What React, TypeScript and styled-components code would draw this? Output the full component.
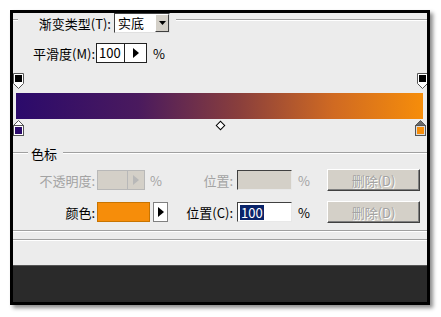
import React from 'react';
import styled, { createGlobalStyle } from 'styled-components';

const GlobalStyle = createGlobalStyle`
  html, body {
    margin: 0;
    padding: 0;
    background: #ffffff;
  }
  body {
    font-family: "Noto Sans CJK SC", "Liberation Sans", sans-serif;
    font-size: 13px;
    color: #000;
  }
`;

const Page = styled.div`
  width: 441px;
  height: 317px;
  padding: 10px 0 0 10px;
  box-sizing: border-box;
`;

const Frame = styled.div`
  width: 420px;
  height: 295px;
  box-sizing: border-box;
  border: 3px solid #000;
  background: #ececec;
  box-shadow: 3px 3px 4px rgba(0, 0, 0, 0.45);
  display: flex;
  flex-direction: column;
  overflow: hidden;
`;

const Etched = styled.div`
  height: 0;
  border-top: 1px solid #a0a0a0;
  border-bottom: 1px solid #ffffff;
`;

const LegendRow = styled.div<{ $height: number; $top?: number }>`
  height: ${({ $height }) => $height}px;
  margin-top: ${({ $top = 0 }) => $top}px;
  display: flex;
  align-items: center;
  gap: 3px;
`;

const LeadLine = styled(Etched)<{ $width: number }>`
  width: ${({ $width }) => $width}px;
  align-self: flex-start;
  margin-top: 6px;
`;

const FillLine = styled(Etched)`
  flex: 1;
  align-self: flex-start;
  margin-top: 6px;
  margin-left: 3px;
`;

const Label = styled.span<{ $disabled?: boolean; $width?: number }>`
  display: inline-block;
  text-align: right;
  white-space: nowrap;
  width: ${({ $width }) => ($width ? `${$width}px` : 'auto')};
  color: ${({ $disabled }) => ($disabled ? '#a3a3a3' : '#000')};
  line-height: 15px;
`;

const Select = styled.div`
  width: 56px;
  height: 20px;
  box-sizing: border-box;
  background: #fff;
  border: 1px solid;
  border-color: #404040 #e0e0e0 #e0e0e0 #404040;
  display: flex;
  align-items: stretch;
`;

const SelectText = styled.span`
  flex: 1;
  padding-left: 3px;
  line-height: 18px;
`;

const DropButton = styled.div`
  width: 14px;
  background: #d4d0c8;
  border: 1px solid;
  border-color: #fff #404040 #404040 #fff;
  box-sizing: border-box;
  display: flex;
  align-items: center;
  justify-content: center;
`;

const Row = styled.div<{ $height: number; $top: number }>`
  height: ${({ $height }) => $height}px;
  margin-top: ${({ $top }) => $top}px;
  display: flex;
  align-items: center;
`;

const SpinBox = styled.div`
  width: 51px;
  height: 20px;
  box-sizing: border-box;
  border: 1px solid #222;
  background: #fff;
  display: flex;
  margin-left: 1px;
`;

const SpinText = styled.span`
  width: 25px;
  padding-left: 2px;
  line-height: 18px;
  border-right: 1px solid #222;
`;

const SpinArrow = styled.div`
  flex: 1;
  display: flex;
  align-items: center;
  justify-content: center;
`;

const Unit = styled.span<{ $disabled?: boolean; $gap: number }>`
  display: inline-block;
  width: 11px;
  margin-left: ${({ $gap }) => $gap}px;
  color: ${({ $disabled }) => ($disabled ? '#a3a3a3' : '#000')};
`;

const Editor = styled.div`
  position: relative;
  height: 64px;
  margin-top: 10px;
`;

const Bar = styled.div`
  position: absolute;
  left: 3px;
  right: 4px;
  top: 20px;
  height: 26px;
  background: linear-gradient(to right, #2b0a6b 0%, #4a1a5e 30%, #8a3f3c 55%, #d06a22 78%, #f68d0a 100%);
`;

const Stop = styled.div<{ $left: number; $top: number }>`
  position: absolute;
  left: ${({ $left }) => $left}px;
  top: ${({ $top }) => $top}px;
  width: 11px;
  height: 16px;
`;

const Diamond = styled.div`
  position: absolute;
  left: 204px;
  top: 49px;
  width: 5px;
  height: 5px;
  border: 1px solid #000;
  background: #fff;
  transform: rotate(45deg);
`;

const Swatch = styled.div<{ $color: string; $width: number; $disabled?: boolean }>`
  width: ${({ $width }) => $width}px;
  height: 20px;
  box-sizing: border-box;
  background: ${({ $color }) => $color};
  border: 1px solid ${({ $disabled }) => ($disabled ? '#b8b8b8' : '#c87400')};
  margin-left: 2px;
  display: flex;
  justify-content: flex-end;
`;

const DisabledArrow = styled.div`
  width: 16px;
  border-left: 1px solid #b8b8b8;
  display: flex;
  align-items: center;
  justify-content: center;
`;

const ArrowButton = styled.div`
  width: 15px;
  height: 20px;
  box-sizing: border-box;
  border: 1px solid #808080;
  background: #fff;
  margin-left: 3px;
  display: flex;
  align-items: center;
  justify-content: center;
`;

const Field = styled.div<{ $disabled?: boolean }>`
  width: 55px;
  height: 20px;
  box-sizing: border-box;
  margin-left: 4px;
  border: 1px solid;
  border-color: #404040 #e8e8e8 #e8e8e8 #404040;
  background: ${({ $disabled }) => ($disabled ? '#d4d0c8' : '#fff')};
  padding: 1px 2px;
  display: flex;
  align-items: center;
`;

const Selected = styled.span`
  background: #0a246a;
  color: #fff;
  line-height: 15px;
  padding: 0 1px;
`;

const Button = styled.div`
  width: 93px;
  height: 22px;
  box-sizing: border-box;
  margin-left: 18px;
  background: #d4d0c8;
  border: 1px solid;
  border-color: #ffffff #404040 #404040 #ffffff;
  box-shadow: inset -1px -1px 0 #808080;
  color: #a3a3a3;
  text-shadow: 1px 1px 0 #ffffff;
  display: flex;
  align-items: center;
  justify-content: center;
`;

const Separator = styled(Etched)<{ $top: number }>`
  margin-top: ${({ $top }) => $top}px;
`;

const Dock = styled.div`
  margin-top: auto;
  height: 36px;
  background: #2a2a2a;
  border-top: 1px solid #555;
`;

const Tri: React.FC<{ color?: string; dir?: 'right' | 'down' }> = ({ color = '#000', dir = 'down' }) =>
  dir === 'down' ? (
    <svg width="7" height="4" viewBox="0 0 7 4"><path d="M0 0h7L3.5 4z" fill={color} /></svg>
  ) : (
    <svg width="6" height="10" viewBox="0 0 6 10"><path d="M0 0l6 5-6 5z" fill={color} /></svg>
  );

const TopStop: React.FC = () => (
  <svg width="11" height="16" viewBox="0 0 11 16">
    <path d="M0.5 0.5h10v10l-5 5-5-5z" fill="#fff" stroke="#555" />
    <rect x="2" y="2" width="7" height="7" fill="#000" />
  </svg>
);

const BottomStop: React.FC<{ color: string; active?: boolean }> = ({ color, active }) => (
  <svg width="11" height="16" viewBox="0 0 11 16">
    <path d="M0.5 15.5h10v-10l-5-5-5 5z" fill={active ? '#6a6a6a' : '#fff'} stroke="#555" />
    <rect x="0.5" y="5.5" width="10" height="10" fill={active ? '#dcdcdc' : '#fff'} stroke="#555" />
    <rect x="2" y="7" width="7" height="7" fill={color} />
  </svg>
);

const App: React.FC = () => {
  return (
    <Page>
      <GlobalStyle />
      <Frame>
        <LegendRow $height={20}>
          <LeadLine $width={5} />
          <Label $width={90}>渐变类型(T):</Label>
          <Select>
            <SelectText>实底</SelectText>
            <DropButton>
              <Tri />
            </DropButton>
          </Select>
          <FillLine />
        </LegendRow>

        <Row $height={20} $top={10}>
          <Label $width={82}>平滑度(M):</Label>
          <SpinBox>
            <SpinText>100</SpinText>
            <SpinArrow>
              <Tri dir="right" />
            </SpinArrow>
          </SpinBox>
          <Unit $gap={6}>%</Unit>
        </Row>

        <Editor>
          <Stop $left={0} $top={0}>
            <TopStop />
          </Stop>
          <Stop $left={404} $top={0}>
            <TopStop />
          </Stop>
          <Bar />
          <Stop $left={0} $top={47}>
            <BottomStop color="#2b0a6b" />
          </Stop>
          <Stop $left={402} $top={47}>
            <BottomStop color="#f68d0a" active />
          </Stop>
          <Diamond />
        </Editor>

        <LegendRow $height={14} $top={9}>
          <LeadLine $width={15} />
          <Label>色标</Label>
          <FillLine />
        </LegendRow>

        <Row $height={22} $top={9}>
          <Label $width={82} $disabled>不透明度:</Label>
          <Swatch $color="#d4d0c8" $width={48} $disabled>
            <DisabledArrow>
              <Tri dir="right" color="#b8b8b8" />
            </DisabledArrow>
          </Swatch>
          <Unit $gap={5} $disabled>%</Unit>
          <Label $width={72} $disabled>位置:</Label>
          <Field $disabled />
          <Unit $gap={6} $disabled>%</Unit>
          <Button>删除(D)</Button>
        </Row>

        <Row $height={22} $top={10}>
          <Label $width={82}>颜色:</Label>
          <Swatch $color="#f68d0a" $width={53} />
          <ArrowButton>
            <Tri dir="right" />
          </ArrowButton>
          <Label $width={65}>位置(C):</Label>
          <Field>
            <Selected>100</Selected>
          </Field>
          <Unit $gap={6}>%</Unit>
          <Button>删除(D)</Button>
        </Row>

        <Separator $top={7} />
        <Separator $top={7} />

        <Dock />
      </Frame>
    </Page>
  );
};

export default App;
